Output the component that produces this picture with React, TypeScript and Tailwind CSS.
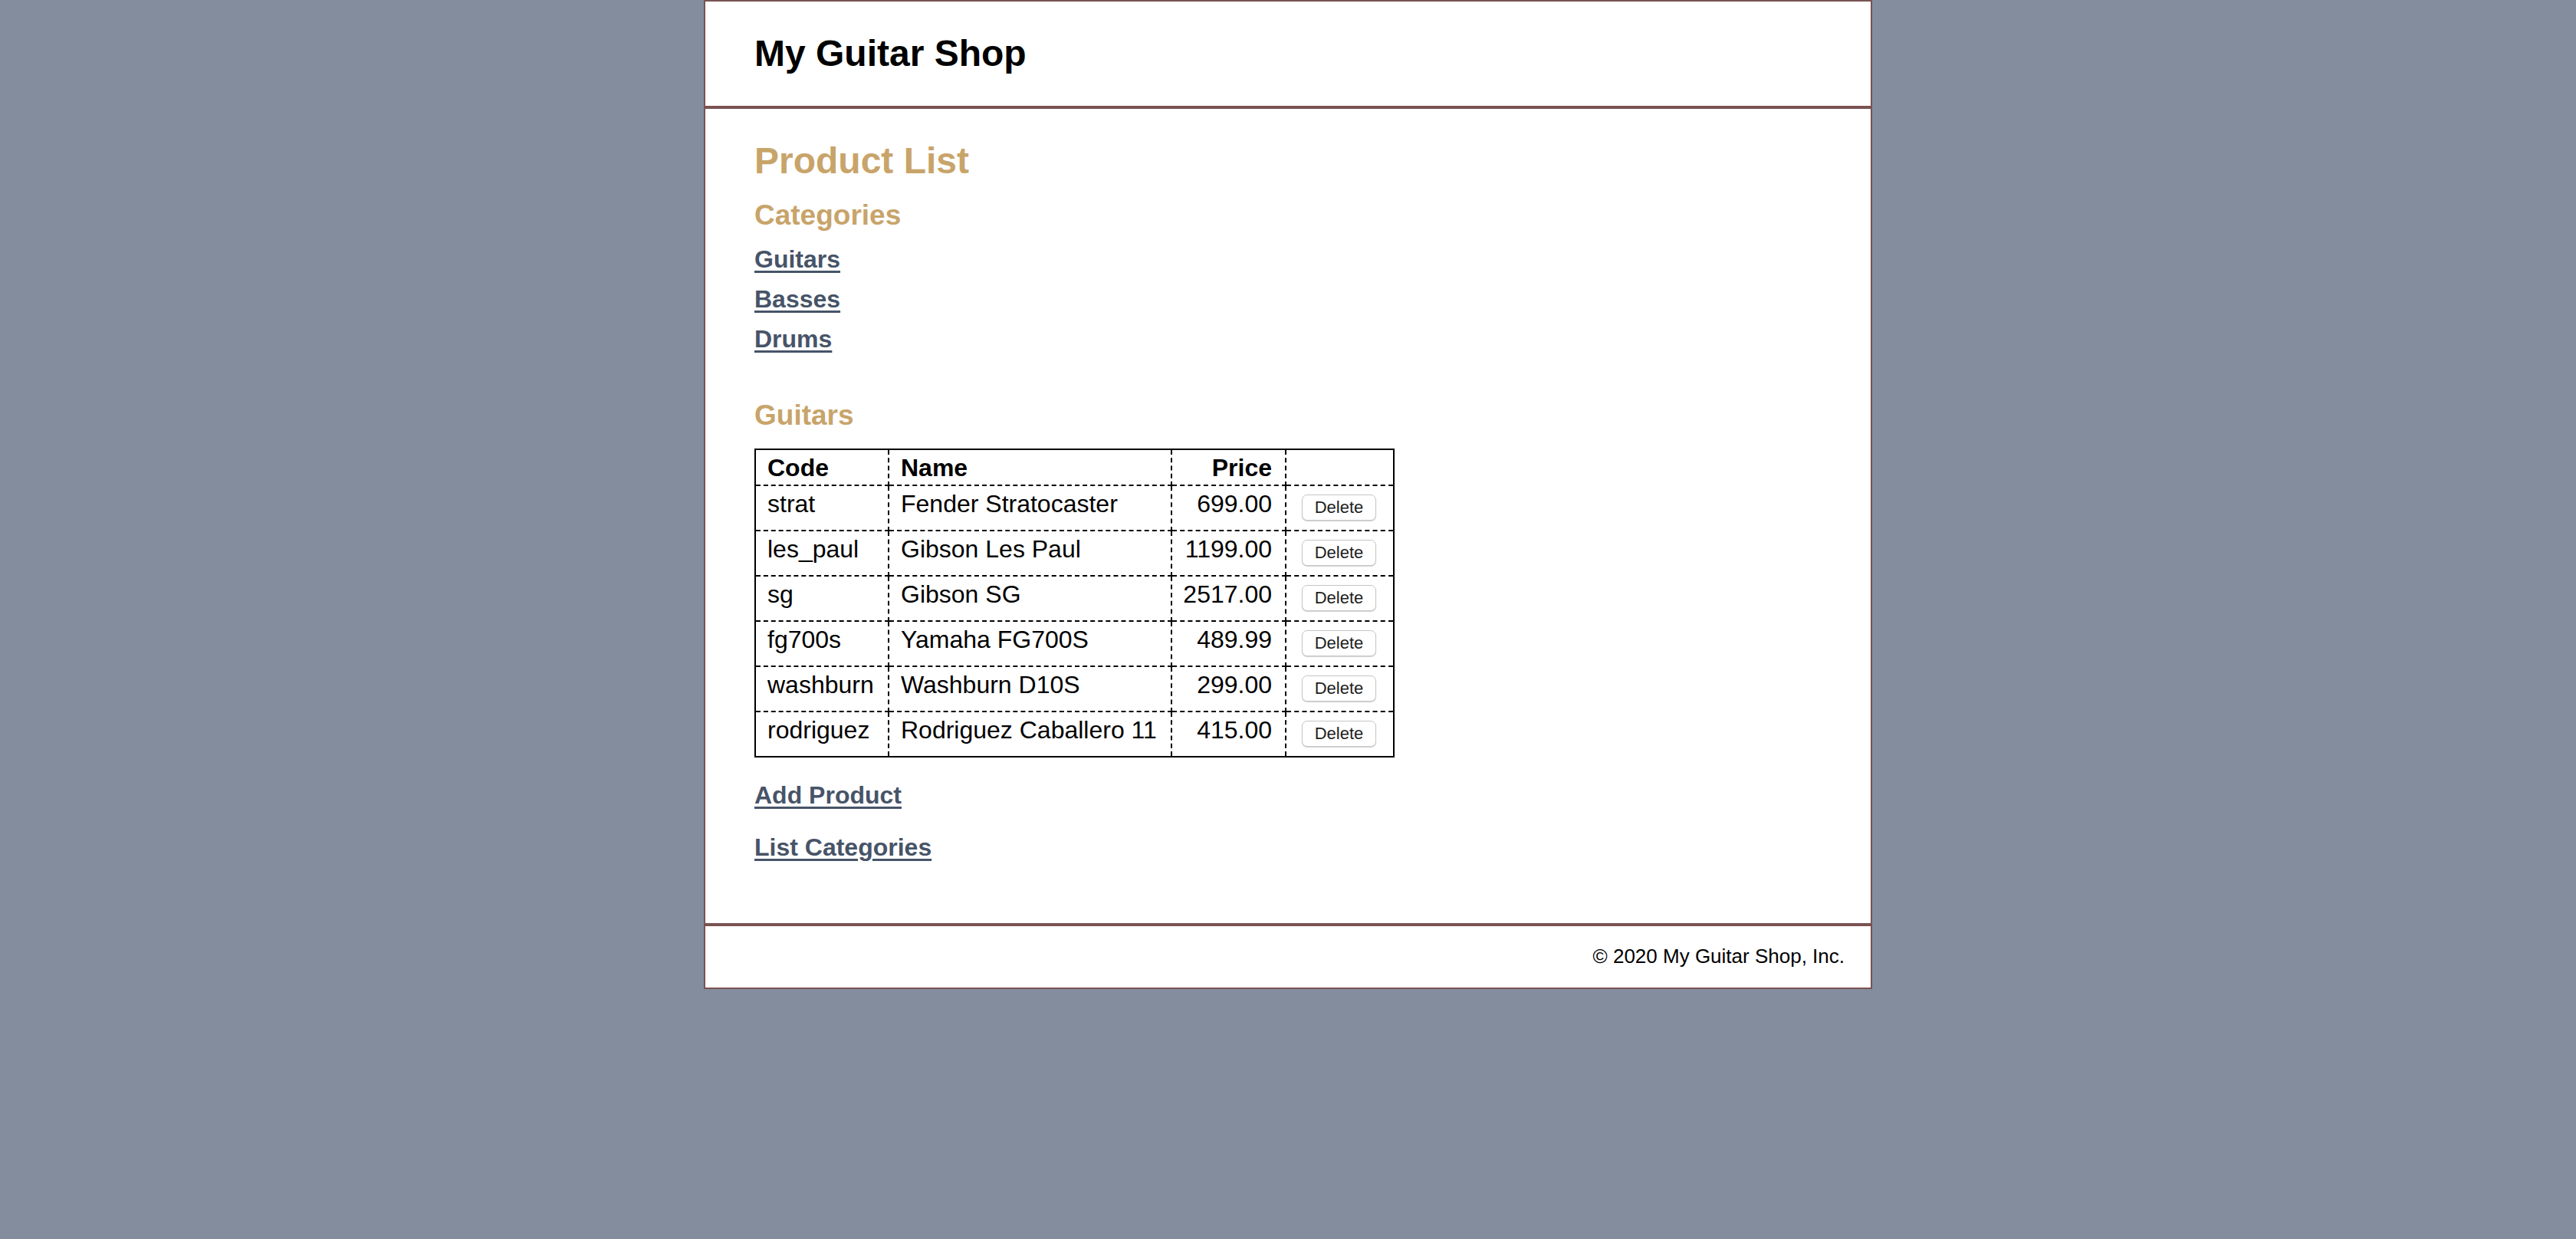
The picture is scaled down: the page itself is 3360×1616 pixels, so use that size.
import React from "react";

const products = [
  { code: "strat", name: "Fender Stratocaster", price: "699.00" },
  { code: "les_paul", name: "Gibson Les Paul", price: "1199.00" },
  { code: "sg", name: "Gibson SG", price: "2517.00" },
  { code: "fg700s", name: "Yamaha FG700S", price: "489.99" },
  { code: "washburn", name: "Washburn D10S", price: "299.00" },
  { code: "rodriguez", name: "Rodriguez Caballero 11", price: "415.00" },
];

export default function App() {
  return (
    <div className="min-h-screen bg-[#838d9d] font-['Liberation_Sans',Arial,sans-serif] text-black">
      <div className="mx-auto w-[1524px] border-2 border-[#7a5252] bg-white">
        <header className="flex h-[140px] items-center border-b-4 border-[#7a5252] pl-[64px]">
          <h1 className="text-[48px] leading-[48px] font-bold">My Guitar Shop</h1>
        </header>
        <main className="pl-[64px] pt-[44px] pb-[83px]">
          <h1 className="text-[48px] leading-[48px] font-bold text-[#c8a46a]">Product List</h1>
          <h2 className="mt-[28px] text-[37px] leading-[37px] font-bold text-[#c8a46a]">Categories</h2>
          <ul className="mt-[23px] flex flex-col gap-[20px]">
            {["Guitars", "Basses", "Drums"].map((c) => (
              <li key={c} className="text-[32px] leading-[32px] font-bold">
                <a href="#" className="text-[#475468] underline decoration-[3px] underline-offset-[4px]">
                  {c}
                </a>
              </li>
            ))}
          </ul>
          <h2 className="mt-[65px] text-[37px] leading-[37px] font-bold text-[#c8a46a]">Guitars</h2>
          <table className="mt-[25px] w-[833px] table-fixed border-collapse border-2 border-solid border-black text-[32px] leading-[36px]">
            <colgroup>
              <col className="w-[174px]" />
              <col className="w-[369px]" />
              <col className="w-[149px]" />
              <col className="w-[141px]" />
            </colgroup>
            <thead>
              <tr className="h-[47px]">
                <th className="border-2 border-dashed border-black pl-[15px] pr-[17px] text-left align-middle font-bold">Code</th>
                <th className="border-2 border-dashed border-black pl-[15px] pr-[17px] text-left align-middle font-bold">Name</th>
                <th className="border-2 border-dashed border-black pl-[15px] pr-[17px] text-right align-middle font-bold">Price</th>
                <th className="border-2 border-dashed border-black"></th>
              </tr>
            </thead>
            <tbody>
              {products.map((p) => (
                <tr key={p.code} className="h-[59px]">
                  <td className="border-2 border-dashed border-black pl-[15px] pr-[8px] pt-[5px] align-top whitespace-nowrap">{p.code}</td>
                  <td className="border-2 border-dashed border-black pl-[15px] pr-[8px] pt-[5px] align-top whitespace-nowrap">{p.name}</td>
                  <td className="border-2 border-dashed border-black pl-[4px] pr-[17px] pt-[5px] text-right align-top whitespace-nowrap">{p.price}</td>
                  <td className="border-2 border-dashed border-black pl-[20px] pt-[11px] align-top">
                    <button className="flex h-[34px] w-[97px] items-center justify-center rounded-[7px] border border-[#c6c6c6] bg-white text-[22px] leading-none text-[#1e1e1e] shadow-[0_1px_1px_rgba(0,0,0,0.18)]">
                      Delete
                    </button>
                  </td>
                </tr>
              ))}
            </tbody>
          </table>
          <p className="mt-[33px] text-[32px] leading-[32px] font-bold">
            <a href="#" className="text-[#475468] underline decoration-[3px] underline-offset-[4px]">Add Product</a>
          </p>
          <p className="mt-[36px] text-[32px] leading-[32px] font-bold">
            <a href="#" className="text-[#475468] underline decoration-[3px] underline-offset-[4px]">List Categories</a>
          </p>
        </main>
        <footer className="border-t-4 border-[#7a5252] pt-[26px] pb-[28px] pr-[34px] text-right text-[26px] leading-[26px]">
          © 2020 My Guitar Shop, Inc.
        </footer>
      </div>
    </div>
  );
}
